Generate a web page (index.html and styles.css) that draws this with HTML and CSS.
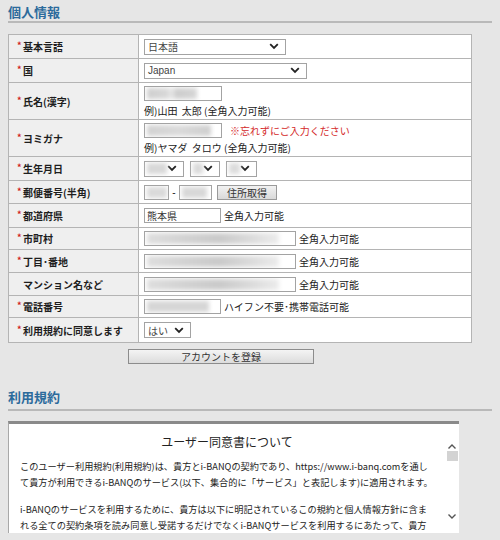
FILE: index.html
```html
<!DOCTYPE html>
<html lang="ja">
<head>
<meta charset="utf-8">
<title>個人情報</title>
<link rel="stylesheet" href="styles.css">
</head>
<body>
<div class="page">
  <h2 class="sec-title">個人情報</h2>
  <table class="form">
    <tr class="h24">
      <th><span class="req">*</span>基本言語</th>
      <td><span class="sel w142"><span class="sel-text">日本語</span><svg class="chev" width="10" height="7" viewBox="0 0 10 7"><path d="M1.2 1.2 L5 5 L8.8 1.2" fill="none" stroke="#222" stroke-width="1.8"/></svg></span></td>
    </tr>
    <tr class="h24">
      <th><span class="req">*</span>国</th>
      <td><span class="sel w163"><span class="sel-text latin">Japan</span><svg class="chev" width="10" height="7" viewBox="0 0 10 7"><path d="M1.2 1.2 L5 5 L8.8 1.2" fill="none" stroke="#222" stroke-width="1.8"/></svg></span></td>
    </tr>
    <tr class="h37">
      <th><span class="req">*</span>氏名(漢字)</th>
      <td class="stack">
        <span class="field w78"><span class="blur b-name"></span></span>
        <span class="note">例)山田&nbsp;&nbsp;太郎 (全角入力可能)</span>
      </td>
    </tr>
    <tr class="h37">
      <th><span class="req">*</span>ヨミガナ</th>
      <td class="stack">
        <span class="line"><span class="field w78"><span class="blur b-kana"></span></span><span class="warn">※忘れずにご入力ください</span></span>
        <span class="note">例)ヤマダ&nbsp;&nbsp;タロウ (全角入力可能)</span>
      </td>
    </tr>
    <tr class="h24">
      <th><span class="req">*</span>生年月日</th>
      <td><span class="line gap6">
        <span class="sel w40"><span class="blur b-year"></span><svg class="chev" width="10" height="7" viewBox="0 0 10 7"><path d="M1.2 1.2 L5 5 L8.8 1.2" fill="none" stroke="#222" stroke-width="1.8"/></svg></span>
        <span class="sel w30"><span class="blur b-mon"></span><svg class="chev" width="10" height="7" viewBox="0 0 10 7"><path d="M1.2 1.2 L5 5 L8.8 1.2" fill="none" stroke="#222" stroke-width="1.8"/></svg></span>
        <span class="sel w31"><span class="blur b-day"></span><svg class="chev" width="10" height="7" viewBox="0 0 10 7"><path d="M1.2 1.2 L5 5 L8.8 1.2" fill="none" stroke="#222" stroke-width="1.8"/></svg></span>
      </span></td>
    </tr>
    <tr class="h23">
      <th><span class="req">*</span>郵便番号(半角)</th>
      <td><span class="line">
        <span class="field w25"><span class="blur b-zip1"></span></span>
        <span class="dash">-</span>
        <span class="field w33"><span class="blur b-zip2"></span></span>
        <button class="btn-small">住所取得</button>
      </span></td>
    </tr>
    <tr class="h24">
      <th><span class="req">*</span>都道府県</th>
      <td><span class="line"><span class="field w77"><span class="val">熊本県</span></span><span class="after">全角入力可能</span></span></td>
    </tr>
    <tr class="h22">
      <th><span class="req">*</span>市町村</th>
      <td><span class="line"><span class="field w152"><span class="blur b-long"></span></span><span class="after">全角入力可能</span></span></td>
    </tr>
    <tr class="h23">
      <th><span class="req">*</span>丁目･番地</th>
      <td><span class="line"><span class="field w152"><span class="blur b-long"></span></span><span class="after">全角入力可能</span></span></td>
    </tr>
    <tr class="h23">
      <th><span class="req blank"></span>マンション名など</th>
      <td><span class="line"><span class="field w152"><span class="blur b-long"></span></span><span class="after">全角入力可能</span></span></td>
    </tr>
    <tr class="h22">
      <th><span class="req">*</span>電話番号</th>
      <td><span class="line"><span class="field w77"><span class="blur b-tel"></span></span><span class="after">ハイフン不要･携帯電話可能</span></span></td>
    </tr>
    <tr class="h25">
      <th><span class="req">*</span>利用規約に同意します</th>
      <td><span class="sel w47"><span class="sel-text">はい</span><svg class="chev" width="10" height="7" viewBox="0 0 10 7"><path d="M1.2 1.2 L5 5 L8.8 1.2" fill="none" stroke="#222" stroke-width="1.8"/></svg></span></td>
    </tr>
  </table>

  <div class="submit-row"><button class="btn-submit">アカウントを登録</button></div>

  <h2 class="sec-title terms-title">利用規約</h2>
  <div class="terms">
    <div class="terms-body">
      <h3 class="terms-head">ユーザー同意書について</h3>
      <p>このユーザー利用規約(利用規約)は、貴方とi-BANQの契約であり、https://www.i-banq.comを通し<br>て貴方が利用できるi-BANQのサービス(以下、集合的に「サービス」と表記します)に適用されます。</p>
      <p>i-BANQのサービスを利用するために、貴方は以下に明記されているこの規約と個人情報方針に含ま<br>れる全ての契約条項を読み同意し受諾するだけでなくi-BANQサービスを利用するにあたって、貴方</p>
    </div>
    <div class="scrollbar">
      <svg width="10" height="7" viewBox="0 0 10 7"><path d="M1.5 5.5 L5 2 L8.5 5.5" fill="none" stroke="#555" stroke-width="1.4"/></svg>
      <span class="thumb"></span>
      <span class="track"></span>
      <svg width="10" height="7" viewBox="0 0 10 7"><path d="M1.5 1.5 L5 5 L8.5 1.5" fill="none" stroke="#555" stroke-width="1.4"/></svg>
    </div>
  </div>
</div>
</body>
</html>
```

FILE: styles.css
```css
html, body {
  margin: 0;
  padding: 0;
  background: #e6e6e6;
}

body {
  font-family: "Liberation Sans", "Noto Sans CJK JP", sans-serif;
  font-size: 10px;
  color: #222;
}

.page {
  padding: 0 8px;
  width: 484px;
}

.sec-title {
  margin: 0;
  padding: 4px 0 1px;
  font-size: 13px;
  line-height: 16px;
  font-weight: bold;
  color: #2c6b9c;
  border-bottom: 2px solid #b9b9b9;
  font-family: "Noto Sans CJK JP", sans-serif;
}

.form {
  margin-top: 11px;
  width: 464px;
  border-collapse: collapse;
  border: 1px solid #a2a2a2;
  background: #fff;
}

.form th,
.form td {
  border: 1px solid #b4b4b4;
  padding: 0;
  vertical-align: middle;
}

.form th {
  width: 121px;
  background: #efefef;
  text-align: left;
  padding-left: 8px;
  font-weight: bold;
  font-size: 10px;
  font-family: "Noto Sans CJK JP", sans-serif;
  white-space: nowrap;
  color: #1e1e1e;
}

.form td {
  padding-left: 5px;
}

.h22 { height: 22px; }
.h23 { height: 23px; }
.h24 { height: 24px; }
.h25 { height: 25px; }
.h37 { height: 37px; }

.req {
  display: inline-block;
  width: 6px;
  color: #d02020;
  font-size: 9px;
  vertical-align: 2px;
}

.stack {
  line-height: 13px;
}

.stack > .field,
.stack > .line,
.stack > .note {
  display: flex;
}

.stack > .note {
  margin-top: 3px;
  font-family: "Noto Sans CJK JP", sans-serif;
}

.line {
  display: flex;
  align-items: center;
}

.gap6 { gap: 6px; }

.field {
  box-sizing: border-box;
  display: inline-flex;
  align-items: center;
  height: 15px;
  background: #fff;
  border: 1px solid #a3a3a3;
  overflow: hidden;
  position: relative;
}

.w25 { width: 25px; }
.w33 { width: 33px; }
.w77 { width: 77px; }
.w78 { width: 78px; }
.w152 { width: 152px; }

.val {
  padding-left: 2px;
  font-family: "Noto Sans CJK JP", sans-serif;
  color: #333;
}

.blur {
  display: block;
  height: 11px;
  margin-left: 2px;
  filter: blur(2px);
}

.b-name {
  width: 50px;
  background: linear-gradient(90deg, #cfcfcf 0, #d8d8d8 40%, #e8e8e8 48%, #cdcdcd 60%, #d6d6d6 100%);
}
.b-kana {
  width: 64px;
  background: linear-gradient(90deg, #d2d2d2, #dadada 50%, #cfcfcf);
}
.b-year { width: 22px; background: #d8d8d8; }
.b-mon { width: 13px; background: #dadada; }
.b-day { width: 13px; background: #dcdcdc; }
.b-zip1 { width: 20px; background: #dadada; }
.b-zip2 { width: 25px; background: #d8d8d8; }
.b-tel { width: 62px; background: #d6d6d6; }
.b-long {
  width: 132px;
  background: linear-gradient(90deg, #dedede 0, #d2d2d2 30%, #cacaca 55%, #dcdcdc 80%, #ececec 100%);
}

.warn {
  margin-left: 8px;
  color: #d42a2a;
  font-family: "Noto Sans CJK JP", sans-serif;
}

.after {
  margin-left: 3px;
  font-family: "Noto Sans CJK JP", sans-serif;
}

.dash {
  width: 10px;
  text-align: center;
}

.sel {
  box-sizing: border-box;
  display: inline-flex;
  align-items: center;
  justify-content: space-between;
  height: 16px;
  background: #fff;
  border: 1px solid #a3a3a3;
  padding: 0 6px 0 3px;
}

.w142 { width: 142px; }
.w163 { width: 163px; }
.w40 { width: 40px; padding-left: 0; }
.w30 { width: 30px; padding-left: 0; }
.w31 { width: 31px; padding-left: 0; }
.w47 { width: 47px; }

.sel-text {
  color: #444;
  font-family: "Noto Sans CJK JP", sans-serif;
}
.sel-text.latin {
  font-family: "Liberation Sans", sans-serif;
}

.chev {
  display: block;
  flex: none;
}

.btn-small {
  box-sizing: border-box;
  margin-left: 5px;
  width: 60px;
  height: 15px;
  padding: 0;
  border: 1px solid #9a9a9a;
  background: linear-gradient(#f2f2f2, #d9d9d9);
  font-family: "Noto Sans CJK JP", sans-serif;
  font-size: 10px;
  line-height: 13px;
  color: #333;
}

.submit-row {
  padding: 6px 0 0 120px;
  height: 15px;
}

.btn-submit {
  box-sizing: border-box;
  display: block;
  width: 186px;
  height: 15px;
  padding: 0;
  border: 1px solid #8c8c8c;
  background: linear-gradient(#f4f4f4, #dcdcdc);
  font-family: "Noto Sans CJK JP", sans-serif;
  font-size: 10px;
  line-height: 13px;
  color: #333;
}

.terms-title {
  margin-top: 25px;
  padding-top: 0;
  padding-bottom: 4px;
}

.terms {
  margin-top: 10px;
  width: 451px;
  height: 112px;
  box-sizing: border-box;
  background: #fff;
  border-top: 3px solid #8a8a8a;
  border-left: 1px solid #a8a8a8;
  display: flex;
  overflow: hidden;
}

.terms-body {
  flex: 1;
  padding: 10px 0 0 11px;
  font-family: "Noto Sans CJK JP", sans-serif;
  font-size: 9.2px;
  line-height: 16px;
  color: #222;
  white-space: nowrap;
  overflow: hidden;
}

.terms-head {
  margin: 0;
  text-align: center;
  font-size: 12px;
  font-weight: normal;
  line-height: 16px;
  padding-right: 11px;
}

.terms-body p {
  margin: 8px 0 0;
}

.terms-body p + p {
  margin-top: 11px;
}

.scrollbar {
  width: 14px;
  flex: none;
  display: flex;
  flex-direction: column;
  align-items: center;
  padding-top: 19px;
}

.thumb {
  display: block;
  width: 11px;
  height: 10px;
  margin-top: 1px;
  background: #d3d3d3;
}

.track {
  flex: 1;
}

.scrollbar svg:last-child {
  margin-bottom: 13px;
}
```
